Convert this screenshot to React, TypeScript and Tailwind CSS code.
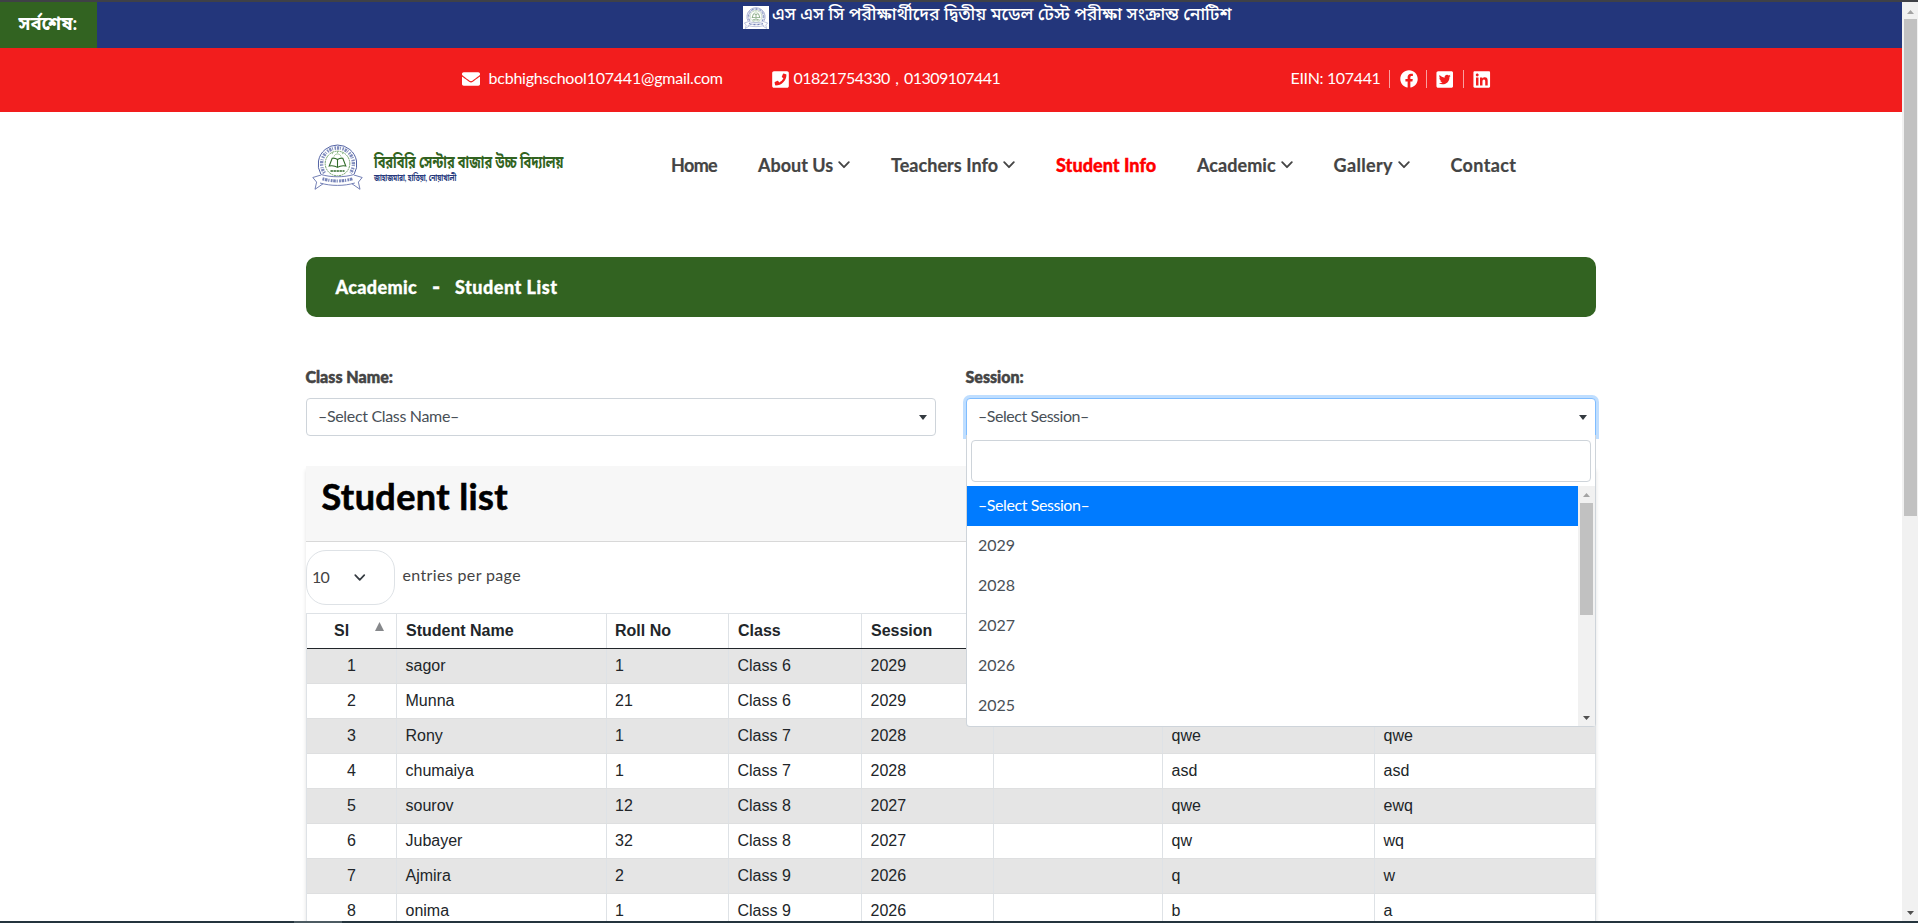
import type { ReactNode } from "react";
import { FaEnvelope, FaPhoneSquare, FaFacebook, FaTwitterSquare, FaLinkedin } from "react-icons/fa";

const navItems = [
  { label: "Home", box: "w-[87px]", text: "tracking-[-0.65px]", menu: false, active: false },
  { label: "About Us", box: "w-[133px]", text: "tracking-normal", menu: true, active: false },
  { label: "Teachers Info", box: "w-[165px]", text: "tracking-[0.05px]", menu: true, active: false },
  { label: "Student Info", box: "w-[141px]", text: "tracking-[0.05px]", menu: false, active: true },
  { label: "Academic", box: "w-[136.5px]", text: "tracking-[0.05px]", menu: true, active: false },
  { label: "Gallery", box: "w-[117px]", text: "tracking-[0.35px]", menu: true, active: false },
  { label: "Contact", box: "w-[80px]", text: "tracking-[0.35px]", menu: false, active: false },
];

const rows = [
  ["1", "sagor", "1", "Class 6", "2029", "", "", ""],
  ["2", "Munna", "21", "Class 6", "2029", "", "", ""],
  ["3", "Rony", "1", "Class 7", "2028", "", "qwe", "qwe"],
  ["4", "chumaiya", "1", "Class 7", "2028", "", "asd", "asd"],
  ["5", "sourov", "12", "Class 8", "2027", "", "qwe", "ewq"],
  ["6", "Jubayer", "32", "Class 8", "2027", "", "qw", "wq"],
  ["7", "Ajmira", "2", "Class 9", "2026", "", "q", "w"],
  ["8", "onima", "1", "Class 9", "2026", "", "b", "a"],
];

const columns = "grid grid-cols-[90px_210px_122px_133px_132px_169px_212px_221px]";

function Chevron({ className }: { className: string }) {
  return (
    <svg viewBox="0 0 12 8" className={className} fill="none" stroke="currentColor" strokeWidth="1.8" strokeLinecap="round" strokeLinejoin="round">
      <path d="M1.2 1.2 6 6.2l4.8-5" />
    </svg>
  );
}

function Triangle({ className }: { className: string }) {
  return (
    <svg viewBox="0 0 8 4" preserveAspectRatio="none" className={className} fill="currentColor">
      <path d="M0 0h8L4 4z" />
    </svg>
  );
}

function Emblem({ className }: { className: string }) {
  return (
    <svg viewBox="0 0 51 46" className={className} fill="none">
      <path d="M8.800 30a19.300 19.300 0 1 1 33.400 0" stroke="#5363a5" strokeWidth="1" />
      <path d="M12.500 29a15.900 15.900 0 1 1 26 0" stroke="#4a5ba0" strokeWidth="3.400" strokeDasharray="1.500 .9 2.200 .8 .9 1.600" opacity=".7" />
      <circle cx="25.500" cy="19.500" r="12.300" stroke="#4e8a46" strokeWidth=".8" strokeDasharray="2 .6" />
      <path d="M22 12.500c1-3.400 6-3.400 7 0M21 10l-1.500-1.200M30 10l1.500-1.200M25.500 9V7" stroke="#8fbb89" strokeWidth=".9" />
      <path d="M25.500 15.500c-2-1.400-3.600-1.600-5.300-1.300l-3 7.800c3-.5 6-.2 8.300 1.400 2.300-1.600 5.300-1.900 8.300-1.400l-3-7.800c-1.700-.3-3.300-.1-5.300 1.300zM25.500 15.500v8" stroke="#2f6a28" strokeWidth="1.100" />
      <path d="M18.500 27h14" stroke="#2f6a28" strokeWidth="1.600" strokeDasharray="2.400 .6" />
      <path d="M9 30.500c10 3 23 3 33 0l.8 8.500c-11 3.200-24 3.200-34.800 0z" fill="#fff" />
      <path d="M9 30.500c10 3 23 3 33 0M8 39c11 3.200 24 3.200 34.800 0" stroke="#6472ad" strokeWidth=".9" />
      <path d="M10.500 34.800c10 2.900 20 2.900 30 0" stroke="#4a5ba0" strokeWidth="3" strokeDasharray="1.800 .7 2.600 .8 1.200 1.300" opacity=".75" />
      <path d="M9 31 .8 33.500l3.800 4.600-1.600 7.200 8-5.500M42 31l8.200 2.500-3.800 4.600 1.600 7.200-8-5.500" stroke="#6472ad" strokeWidth=".9" />
    </svg>
  );
}

function SelectBox({ label, text, textClass, open, children }: { label: string; text: string; textClass: string; open?: boolean; children?: ReactNode }) {
  return (
    <div className="w-[630px]">
      <div className="-ml-[0.5px] h-[32px] text-[16px] font-black leading-[21px] text-[#444] [-webkit-text-stroke:0.5px]">{label}</div>
      <div className="relative">
        <div
          className={
            "flex h-[38px] items-center justify-between rounded border bg-white pl-[11px] pr-2 text-[16px] text-[#495057] " +
            (open ? "border-[#80bdff] rounded-b-none shadow-[0_0_0_3px_#bfdeff]" : "border-[#ced4da]")
          }
        >
          <span className={"pb-[2px] " + textClass}>{text}</span>
          <Triangle className="h-[5px] w-2 text-[#343a40]" />
        </div>
        {children}
      </div>
    </div>
  );
}

function SessionMenu() {
  return (
    <div className="absolute left-0 top-[37px] z-10 h-[292px] w-[630px] rounded-b border border-t-0 border-[#ced4da] bg-white pt-[5px]">
      <div className="mx-1 h-[42px] rounded border border-[#ced4da] bg-white" />
      <div className="mt-1 flex h-[240px]">
        <ul className="w-[611px] text-[16px] text-[#495057]">
          <li className="flex h-10 items-center bg-[#007bff] pb-[2px] pl-[11px] tracking-[-0.42px] text-white">–Select Session–</li>
          {["2029", "2028", "2027", "2026", "2025"].map((y) => (
            <li key={y} className="flex h-10 items-center pb-[2px] pl-[11px]">{y}</li>
          ))}
        </ul>
        <div className="flex w-[17px] flex-col items-center bg-[#f1f1f1]">
          <div className="flex h-[17px] items-center">
            <Triangle className="h-1 w-[7px] rotate-180 text-[#a3a3a3]" />
          </div>
          <div className="h-[112px] w-[13px] bg-[#c1c1c1]" />
          <div className="mt-auto flex h-[17px] items-center">
            <Triangle className="h-1 w-[7px] text-[#505050]" />
          </div>
        </div>
      </div>
    </div>
  );
}

export default function App() {
  return (
    <div className="flex h-[923px] w-[1918px] flex-col overflow-hidden bg-white font-['Lato','Noto_Sans_Bengali',sans-serif]">
      <div className="h-[2px] shrink-0 bg-[#3f4147]" />
      <div className="flex h-[919px] shrink-0">
        <div className="w-[1902px] overflow-hidden">
          <div className="flex h-[46px] bg-[#23367b]">
            <div className="flex w-[97px] items-center bg-[#326321] pb-[3px] pl-[18.500px] text-[18.500px] font-bold text-white">
              <span className="whitespace-nowrap">সর্বশেষ:</span>
            </div>
            <div className="flex items-start pl-[645.500px]">
              <div className="mt-1 flex h-[23px] w-[26px] items-center justify-center bg-white">
                <Emblem className="h-[22px] w-[24px]" />
              </div>
              <span className="pl-[3.500px] text-[17.5px] font-medium leading-[24px] whitespace-nowrap text-white">এস এস সি পরীক্ষার্থীদের দ্বিতীয় মডেল টেস্ট পরীক্ষা সংক্রান্ত নোটিশ</span>
            </div>
          </div>

          <div className="flex h-[64px] items-center bg-[#f21d1d] pb-[2px] pl-[462px] text-[16px] text-white">
            <FaEnvelope className="mr-[8.500px] h-[18px] w-[18px]" />
            <span className="w-[283px] pb-[2px] tracking-[-0.22px]">bcbhighschool107441@gmail.com</span>
            <FaPhoneSquare className="mr-[5px] h-[19px] w-[17px]" />
            <span className="w-[497px] pb-[2px] tracking-[-0.52px] [word-spacing:1.900px]">01821754330 , 01309107441</span>
            <span className="w-[98px] pb-[2px] tracking-[-0.35px]">EIIN: 107441</span>
            <span className="h-[18px] w-px bg-[#f9a0a0]" />
            <FaFacebook className="ml-[10px] mr-2 h-[18px] w-[18px]" />
            <span className="h-[18px] w-px bg-[#f9a0a0]" />
            <FaTwitterSquare className="mx-[9px] h-[19px] w-[17.500px]" />
            <span className="ml-[0.5px] h-[18px] w-px bg-[#f9a0a0]" />
            <FaLinkedin className="ml-[9.500px] h-[19px] w-[17.500px]" />
          </div>

          <header className="flex h-[145px] items-start pl-[312px]">
            <Emblem className="mt-8 h-[46px] w-[51px]" />
            <div className="mt-[38px] w-[308px] pl-[10.500px]">
              <div className="origin-left scale-x-[0.755] text-[17px] font-bold leading-[24px] whitespace-nowrap text-[#326321]">বিরবিরি সেন্টার বাজার উচ্চ বিদ্যালয়</div>
              <div className="-mt-[2px] origin-left scale-x-[0.725] text-[9px] font-bold leading-[12px] whitespace-nowrap text-[#23367b]">জাহাজমারা, হাতিয়া, নোয়াখালী</div>
            </div>
            <nav className="mt-[41px] flex text-[18px] leading-[24px] text-[#444]">
              {navItems.map((n) => (
                <a key={n.label} className={"flex shrink-0 items-center whitespace-nowrap " + n.box + (n.active ? " font-black text-[#ff0000] [-webkit-text-stroke:0.4px]" : " font-bold [-webkit-text-stroke:0.2px]")}>
                  <span className={n.text}>{n.label}</span>
                  {n.menu && <Chevron className="ml-[5px] h-2 w-3" />}
                </a>
              ))}
            </nav>
          </header>

          <main className="ml-[306px] w-[1290px]">
            <div className="flex h-[60px] items-center rounded-[10px] bg-[#326321] pl-[29.500px] text-[18px] font-black text-white [-webkit-text-stroke:0.3px]">
              <span className="w-[96.500px] tracking-[0.35px]">Academic</span>
              <span className="w-[23px] text-[22px] leading-[24px]">-</span>
              <span className="tracking-[0.5px]">Student List</span>
            </div>

            <div className="mt-[49px] flex justify-between">
              <SelectBox label="Class Name:" text="–Select Class Name–" textClass="tracking-[-0.33px]" />
              <SelectBox label="Session:" text="–Select Session–" textClass="tracking-[-0.45px]" open>
                <SessionMenu />
              </SelectBox>
            </div>

            <section className="mt-[30px] shadow-[0_4px_4px_rgba(0,0,0,0.12)]">
              <div className="h-[76px] border-b border-[#d8d8d8] bg-[#f7f7f7] pl-[15.500px] pt-[8px]">
                <h1 className="text-[36px] font-bold leading-[44px] tracking-[0.4px] text-black [-webkit-text-stroke:0.6px]">Student list</h1>
              </div>
              <div className="flex h-[71px] items-start pt-2 text-[16px] text-[#444]">
                <div className="flex h-[55px] w-[89px] items-center rounded-[20px] border border-[#dee2e6] pl-[5px]">
                  <span className="w-[42px] pb-px text-[16px] tracking-[-0.8px]">10</span>
                  <Chevron className="h-[7.500px] w-[11.500px] text-[#343a40]" />
                </div>
                <span className="pl-[7.500px] leading-[50px] tracking-[0.36px]">entries per page</span>
              </div>

              <div className="border-l border-t border-[#dee2e6] font-['Liberation_Sans',sans-serif] text-[16px] leading-[24px] text-[#212529]">
                <div className={columns + " h-[35px] border-b border-[#212529] font-bold"}>
                  <div className="flex items-start border-r border-[#dee2e6] pl-[27px] pt-[5px]">
                    <span className="w-[40.500px]">Sl</span>
                    <Triangle className="mt-[3px] h-[9px] w-[9px] rotate-180 text-[#86888b]" />
                  </div>
                  {["Student Name", "Roll No", "Class", "Session", "", "", ""].map((h, i) => (
                    <div key={i} className={"border-r border-[#dee2e6] pt-[5px] " + (i === 1 ? "pl-[8px]" : "pl-[9px]")}>{h}</div>
                  ))}
                </div>
                {rows.map((r, i) => (
                  <div key={r[0]} className={columns + " h-[35px] border-b border-[#dedfe0] " + (i % 2 === 0 ? "bg-[#e5e5e5]" : "bg-white")}>
                    {r.map((c, j) => (
                      <div key={j} className={"border-r border-[#dee2e6] pt-[5px] " + (j === 0 ? "text-center" : j === 2 ? "pl-[8px]" : "pl-[8.500px]")}>{c}</div>
                    ))}
                  </div>
                ))}
              </div>
            </section>
          </main>
        </div>

        <div className="flex w-4 flex-col items-center bg-[#f1f1f1]">
          <div className="flex h-[17px] items-center pt-[2px]">
            <Triangle className="h-1 w-[7px] rotate-180 text-[#a3a3a3]" />
          </div>
          <div className="h-[497px] w-[13px] bg-[#c1c1c1]" />
          <div className="mt-auto flex h-[17px] items-center">
            <Triangle className="h-1 w-[7px] text-[#505050]" />
          </div>
        </div>
      </div>
      <div className="flex h-[2px] shrink-0 bg-[#24343d]">
        <div className="ml-[294px] w-12 bg-[#4c5b62]" />
      </div>
    </div>
  );
}
